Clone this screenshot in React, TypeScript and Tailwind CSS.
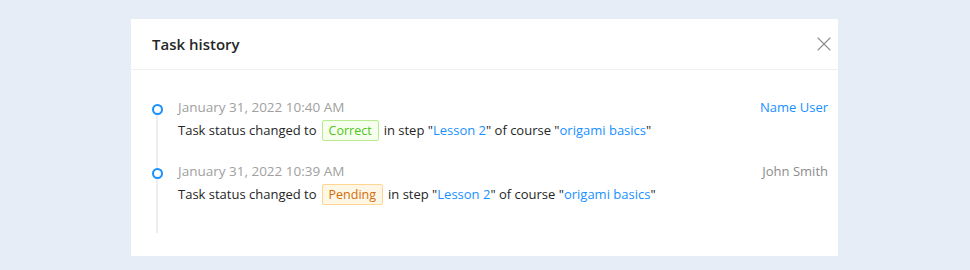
import { X } from 'lucide-react'

interface HistoryItem {
  date: string
  user: string
  userIsLink: boolean
  status: 'Correct' | 'Pending'
}

const items: HistoryItem[] = [
  { date: 'January 31, 2022 10:40 AM', user: 'Name User', userIsLink: true, status: 'Correct' },
  { date: 'January 31, 2022 10:39 AM', user: 'John Smith', userIsLink: false, status: 'Pending' },
]

function StatusTag({ status }: { status: HistoryItem['status'] }) {
  const cls =
    status === 'Correct'
      ? 'border-[#b7eb8f] bg-[#f6ffed] text-[#52c41a]'
      : 'border-[#ffd591] bg-[#fff7e6] text-[#d46b08]'
  return (
    <span className={`mx-[5px] inline-block rounded-[2px] border px-[6px] text-[12.5px] leading-[19px] ${cls}`}>
      {status}
    </span>
  )
}

export default function App() {
  return (
    <div
      className="h-[270px] w-full bg-[#e6edf7] pt-[19px]"
      style={{ fontFamily: '"Open Sans", "Noto Sans", sans-serif' }}
    >
      <div className="ml-[131px] h-[237px] w-[707px] bg-white">
        <div className="flex h-[51px] items-center justify-between border-b border-[#f0f0f0] pl-[21px] pr-[2px]">
          <span className="text-[15px] font-semibold text-[#262626]">Task history</span>
          <X className="h-[24px] w-[24px] text-[#8c8c8c]" strokeWidth={1.1} />
        </div>
        <div className="relative ml-[21px] mr-[10px] mt-[32px]">
          <div className="absolute left-[4px] top-[6px] h-[125px] w-[2px] bg-[#eeeeee]" />
          <div className="flex flex-col gap-[19px]">
            {items.map(item => (
              <div key={item.date} className="relative flex">
                <div className="relative z-10 mt-[2px] h-[11px] w-[11px] rounded-full border-[2.5px] border-[#1890ff] bg-white" />
                <div className="ml-[15px] flex-1 text-[13px] leading-[22px]">
                  <div className="flex justify-between">
                    <span className="-mt-[6px] text-[13.5px] text-[#a0a0a0]">{item.date}</span>
                    <span className={`-mt-[6px] ${item.userIsLink ? 'text-[#1890ff]' : 'text-[#8c8c8c]'}`}>
                      {item.user}
                    </span>
                  </div>
                  <div className="pb-[6px] pt-[1px] text-[#262626]">
                    Task status changed to
                    <StatusTag status={item.status} />
                    in step "<span className="text-[#1890ff]">Lesson 2</span>" of course "
                    <span className="text-[#1890ff]">origami basics</span>"
                  </div>
                </div>
              </div>
            ))}
          </div>
        </div>
      </div>
    </div>
  )
}
